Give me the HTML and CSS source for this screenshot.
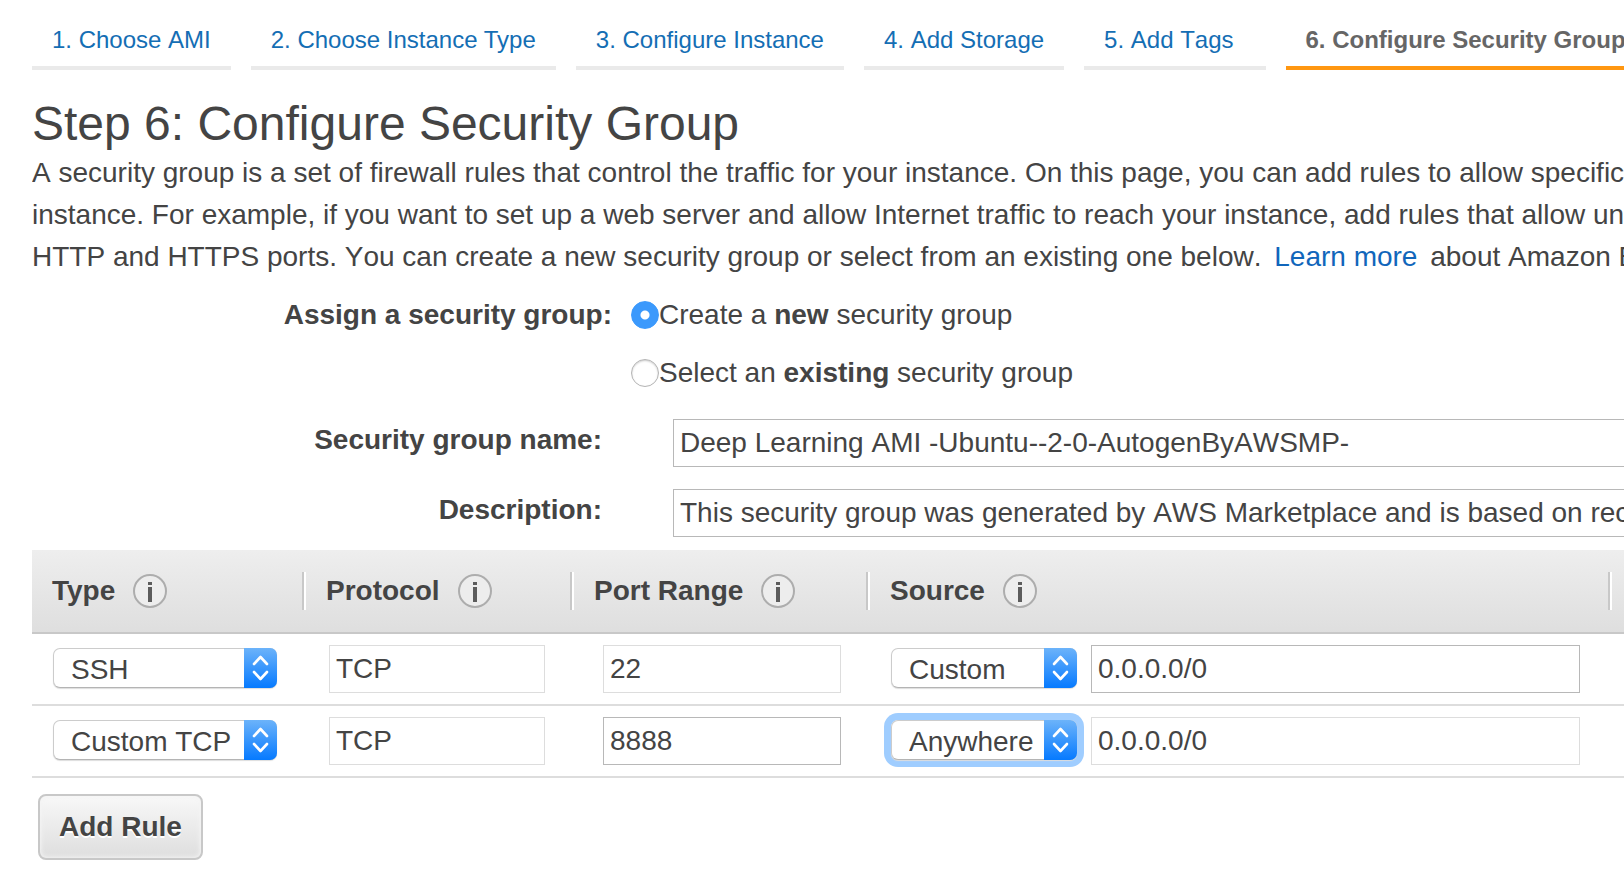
FILE: index.html
```html
<!DOCTYPE html>
<html lang="en">
<head>
<meta charset="utf-8">
<title>Step 6: Configure Security Group</title>
<link rel="stylesheet" href="styles.css">
</head>
<body>
<svg width="0" height="0" class="sprite" aria-hidden="true">
  <symbol id="info" viewBox="0 0 34 34">
    <circle cx="17" cy="17" r="16" fill="#ededed" stroke="#adadad" stroke-width="2"/>
    <path d="M15 8h4v3h-4zM15 13h4v15h-4z" fill="#5c5c5c"/>
  </symbol>
  <symbol id="updown" viewBox="0 0 33 40">
    <path d="M10 16l6.500-7 6.500 7M10 24l6.500 7 6.500-7" fill="none" stroke="#fff" stroke-width="2.600" stroke-linecap="round" stroke-linejoin="round"/>
  </symbol>
</svg>
<nav class="steps" aria-label="Wizard steps">
  <a class="step" href="#">1. Choose AMI</a>
  <a class="step kerned" href="#">2. Choose Instance Type</a>
  <a class="step" href="#">3. Configure Instance</a>
  <a class="step" href="#">4. Add Storage</a>
  <a class="step step-wide" href="#">5. Add Tags</a>
  <a class="step step-current" href="#" aria-current="step">6. Configure Security Group</a>
</nav>
<main class="page">
  <h1 class="title">Step 6: Configure Security Group</h1>
  <p class="intro">A security group is a set of firewall rules that control the traffic for your instance. On this page, you can add rules to allow specific traffic<br>instance. For example, if you want to set up a web server and allow Internet traffic to reach your instance, add rules that allow unrestricted<br>HTTP and HTTPS ports. You can create a new security group or select from an existing one below. <a class="link" href="#">Learn more</a> about Amazon EC2</p>

  <div class="assign" role="radiogroup" aria-labelledby="assign-label">
    <span class="label" id="assign-label">Assign a security group:</span>
    <div class="choices">
      <label class="choice"><input class="radio" type="radio" name="assign" checked><span>Create a <b>new</b> security group</span></label>
      <label class="choice"><input class="radio" type="radio" name="assign"><span>Select an <b>existing</b> security group</span></label>
    </div>
  </div>

  <div class="fields">
    <label class="label" for="name">Security group name:</label>
    <input class="text text-bleed" id="name" type="text" value="Deep Learning AMI -Ubuntu--2-0-AutogenByAWSMP-">
    <label class="label" for="desc">Description:</label>
    <input class="text text-bleed" id="desc" type="text" value="This security group was generated by AWS Marketplace and is based on recommended settings">
  </div>

  <table class="rules">
    <colgroup><col class="col-type"><col class="col-protocol"><col class="col-port"><col><col class="col-more"></colgroup>
    <thead>
      <tr>
        <th scope="col"><div class="head kerned">Type <svg class="info"><use href="#info"/></svg></div></th>
        <th scope="col"><div class="head">Protocol <svg class="info"><use href="#info"/></svg></div></th>
        <th scope="col"><div class="head">Port Range <svg class="info"><use href="#info"/></svg></div></th>
        <th scope="col"><div class="head">Source <svg class="info"><use href="#info"/></svg></div></th>
        <td></td>
      </tr>
    </thead>
    <tbody>
      <tr>
        <td class="type"><div class="picker"><select class="select" aria-label="Type"><option>SSH</option></select><svg class="arrows"><use href="#updown"/></svg></div></td>
        <td class="protocol"><input class="text" type="text" aria-label="Protocol" value="TCP" disabled></td>
        <td class="port"><input class="text" type="text" aria-label="Port range" value="22" disabled></td>
        <td class="source"><div class="pair"><div class="picker picker-source"><select class="select" aria-label="Source"><option>Custom</option></select><svg class="arrows"><use href="#updown"/></svg></div><input class="text" type="text" aria-label="Source address" value="0.0.0.0/0"></div></td>
        <td></td>
      </tr>
      <tr>
        <td class="type"><div class="picker"><select class="select" aria-label="Type"><option>Custom TCP</option></select><svg class="arrows"><use href="#updown"/></svg></div></td>
        <td class="protocol"><input class="text" type="text" aria-label="Protocol" value="TCP" disabled></td>
        <td class="port"><input class="text" type="text" aria-label="Port range" value="8888"></td>
        <td class="source"><div class="pair"><div class="picker picker-source picker-focus"><select class="select" aria-label="Source"><option>Anywhere</option></select><svg class="arrows"><use href="#updown"/></svg></div><input class="text" type="text" aria-label="Source address" value="0.0.0.0/0" disabled></div></td>
        <td></td>
      </tr>
    </tbody>
  </table>
  <button class="add" type="button">Add Rule</button>
</main>
</body>
</html>
```
FILE: styles.css
```css
* { box-sizing: border-box; }

body {
  margin: 0;
  overflow-x: hidden;
  background: #fff;
  color: #444;
  font: 28px/42px "Liberation Sans", Arial, sans-serif;
  font-kerning: none;
}

input, select, button {
  font: inherit;
  font-kerning: none;
  color: inherit;
}

.kerned { font-kerning: normal; }

.sprite { display: block; }

.steps {
  display: flex;
  gap: 20px;
  padding: 26px 0 0 32px;
  font-size: 24px;
  line-height: 28px;
  white-space: nowrap;
}
.step {
  flex: none;
  padding: 0 20px 12px;
  border-bottom: 4px solid #eaeaea;
  color: #146eb4;
  text-decoration: none;
}
.step-wide { padding-right: 32px; }
.step-current {
  border-color: #ff9711;
  color: #666;
  font-weight: bold;
}

.page { padding-left: 32px; }

.title {
  margin: 26px 0 0;
  font-size: 48px;
  font-weight: normal;
  line-height: 56px;
}
.intro {
  margin: 0;
  overflow: hidden;
  white-space: nowrap;
}
.link {
  margin: 0 5px;
  color: #1166bb;
  text-decoration: none;
}

.label {
  font-weight: bold;
  text-align: right;
}
.assign {
  display: grid;
  grid-template-columns: 580px 1fr;
  column-gap: 19px;
  margin-top: 8px;
  line-height: 58px;
}
.choices { display: grid; }
.choice {
  display: flex;
  align-items: center;
}
.radio {
  appearance: none;
  width: 28px;
  height: 28px;
  margin: 0;
  border: 1px solid #b4b4b4;
  border-radius: 50%;
  background: #fff;
  box-shadow: inset 0 1px 2px #ccc;
}
.radio:checked {
  border-color: #3b99fc;
  background: radial-gradient(circle, #fff 4px, #3b99fc 5px);
  box-shadow: none;
}

.fields {
  display: grid;
  grid-template-columns: 570px 1fr;
  gap: 22px 71px;
  margin-top: 17px;
}
.text {
  display: block;
  width: 100%;
  min-width: 0;
  height: 48px;
  padding: 0 6px;
  border: 1px solid #b8b8b8;
  border-radius: 0;
  background: #fff;
}
.text:disabled { border-color: #ddd; }
.text-bleed {
  padding-right: 0;
  border-right: 0;
}

.rules {
  width: 100%;
  margin-top: 13px;
  border-collapse: separate;
  border-spacing: 0;
  table-layout: fixed;
}
.col-type { width: 274px; }
.col-protocol { width: 268px; }
.col-port { width: 296px; }
.col-more { width: 12px; }
.rules thead { background: linear-gradient(#eee, #dedede); }
.rules th {
  padding: 22px 2px 22px 20px;
  border-bottom: 2px solid #c8c8c8;
  text-align: left;
}
.rules thead td { border-bottom: 2px solid #c8c8c8; }
.head {
  display: flex;
  align-items: center;
  gap: 18px;
  height: 38px;
  border-right: 2px solid #c8c8c8;
  box-shadow: 2px 0 #fff;
}
.info {
  width: 34px;
  height: 34px;
}
.rules tbody td {
  padding: 11px 29px;
  border-bottom: 2px solid #ddd;
}
.rules tbody .type { padding-left: 21px; }
.rules tbody .protocol { padding-left: 23px; }
.rules tbody .source { padding: 11px 32px 11px 21px; }
.rules tbody td:last-child { padding: 0; }

.pair {
  display: flex;
  align-items: center;
  gap: 14px;
}
.picker {
  position: relative;
  height: 40px;
  margin-bottom: 2px;
  border-radius: 7px;
}
.picker-source { flex: 0 0 186px; }
.picker-focus { box-shadow: 0 0 0 7px #9fcdff; }
.select {
  appearance: none;
  display: block;
  width: 100%;
  height: 40px;
  padding: 0 34px 0 17px;
  border: 1px solid #ccc;
  border-bottom-color: #b4b4b4;
  border-radius: 7px;
  outline: 0;
  background: #fff;
  box-shadow: 0 1px 1px #ddd;
}
.arrows {
  position: absolute;
  top: 0;
  right: 0;
  width: 33px;
  height: 40px;
  border-radius: 0 7px 7px 0;
  background: linear-gradient(#6cb3fa, #067aff);
  pointer-events: none;
}

.add {
  display: block;
  height: 66px;
  margin: 16px 0 10px 6px;
  padding: 0 19px;
  border: 2px solid #c8c8c8;
  border-radius: 8px;
  background: linear-gradient(#f8f8f8, #dedede);
  box-shadow: inset 0 0 4px 1px #f4f4f4;
  font-weight: bold;
  text-shadow: 0 2px #fff;
}
```
